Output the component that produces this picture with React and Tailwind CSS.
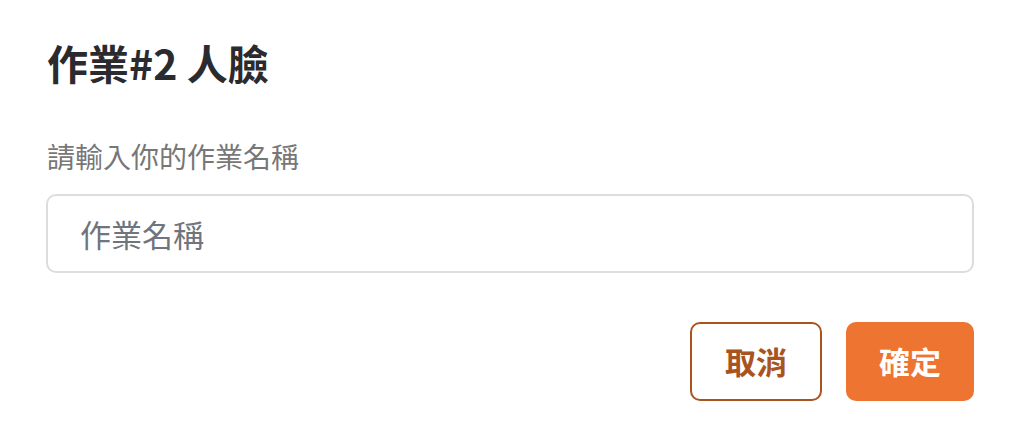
export default function App() {
  return (
    <div
      className="w-[1016px] h-[430px] bg-white pl-[46px] pr-[42px] pt-[38px]"
      style={{ fontFamily: '"Noto Sans CJK TC", "Noto Sans", sans-serif' }}
    >
      {/* Title */}
      <h1 className="pl-[1px] text-[41px] leading-[48px] font-bold text-[#2b2b2f]">
        作業#2 人臉
      </h1>

      {/* Label */}
      <label className="mt-[54px] block pl-[1px] text-[28px] leading-[32px] text-[#777777]">
        請輸入你的作業名稱
      </label>

      {/* Input */}
      <input
        type="text"
        placeholder="作業名稱"
        className="mt-[22px] block h-[79px] w-full rounded-[10px] border-2 border-[#dddde1] bg-white px-[32px] text-[31px] text-[#2b2b2f] placeholder:text-[#70747c] outline-none"
      />

      {/* Actions */}
      <div className="mt-[49px] flex justify-end gap-[24px]">
        <button className="h-[79px] w-[132px] rounded-[10px] border-2 border-[#a9541f] bg-white text-[31px] font-bold text-[#a9541f]">
          取消
        </button>
        <button className="h-[79px] w-[128px] rounded-[10px] bg-[#ee7431] text-[31px] font-bold text-white">
          確定
        </button>
      </div>
    </div>
  );
}
